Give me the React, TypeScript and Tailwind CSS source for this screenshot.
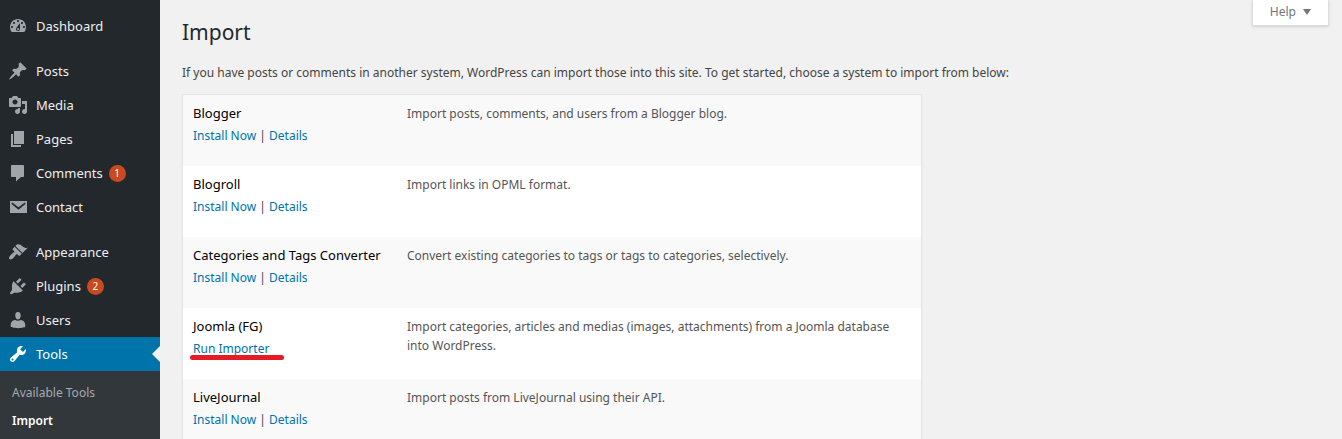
import { Fragment } from "react";

const icons = {
  dashboard:
    "M3.76 16h12.48c1.1-1.37 1.76-3.11 1.76-5 0-4.42-3.58-8-8-8s-8 3.58-8 8c0 1.89.66 3.63 1.76 5zM10 4c.55 0 1 .45 1 1s-.45 1-1 1-1-.45-1-1 .45-1 1-1zM6 6c.55 0 1 .45 1 1s-.45 1-1 1-1-.45-1-1 .45-1 1-1zm8 0c.55 0 1 .45 1 1s-.45 1-1 1-1-.45-1-1 .45-1 1-1zm-5.37 5.55L12 7v6c0 1.1-.9 2-2 2s-2-.9-2-2c0-.57.24-1.08.63-1.45zM4 10c.55 0 1 .45 1 1s-.45 1-1 1-1-.45-1-1 .45-1 1-1zm12 0c.55 0 1 .45 1 1s-.45 1-1 1-1-.45-1-1 .45-1 1-1zm-5 3c0-.55-.45-1-1-1s-1 .45-1 1 .45 1 1 1 1-.45 1-1z",
  posts:
    "M10.44 3.02l1.82-1.82 6.36 6.35-1.83 1.82c-1.05-.68-2.48-.57-3.41.36l-.75.75c-.92.93-1.04 2.35-.35 3.41l-1.83 1.82-2.41-2.41-2.8 2.79c-.42.42-3.38 2.71-3.8 2.29s1.86-3.39 2.28-3.81l2.79-2.79L4.1 9.36l1.83-1.82c1.05.69 2.48.57 3.4-.36l.75-.75c.93-.92 1.05-2.35.36-3.41z",
  media:
    "M13 11V4c0-.55-.45-1-1-1h-1.67L9 1H5L3.67 3H2c-.55 0-1 .45-1 1v7c0 .55.45 1 1 1h10c.55 0 1-.45 1-1zM7 4.5c1.38 0 2.5 1.12 2.5 2.5S8.38 9.5 7 9.5 4.5 8.38 4.5 7 5.62 4.5 7 4.5zM14 6h5v10.5c0 1.38-1.12 2.5-2.5 2.5S14 17.88 14 16.5s1.12-2.5 2.5-2.5c.17 0 .34.02.5.05V9h-3V6zm-4 8.05V13h2v3.5c0 1.38-1.12 2.5-2.5 2.5S7 17.88 7 16.5 8.12 14 9.5 14c.17 0 .34.02.5.05z",
  pages: "M6 15V2h10v13H6zm-1 1h8v2H3V5h2v11z",
  comments:
    "M4 2h11c.6 0 1 .4 1 1v10c0 .6-.4 1-1 1h-2l-5 4.5V14H4c-.6 0-1-.4-1-1V3c0-.6.4-1 1-1z",
  contact:
    "M2 4h17v12H2zM4.2 5.6L3.3 6.7l7.2 6 7.2-6-.9-1.1-6.3 4.7z",
  appearance:
    "M14.48 11.06L7.41 3.99l1.5-1.5c.5-.56 2.3-.47 3.51.32 1.21.8 1.43 1.28 2.91 2.1 1.18.64 2.45 1.26 4.45.85zm-.71.71L6.7 4.7 4.93 6.47c-.39.39-.39 1.02 0 1.41l1.06 1.06c.39.39.39 1.03 0 1.42-.6.6-1.43 1.11-2.21 1.69-.35.26-.7.53-1.01.84C1.43 14.23.4 16.08 1.4 17.07c.99 1 2.84-.03 4.18-1.36.31-.31.58-.66.85-1.02.57-.78 1.08-1.61 1.69-2.21.39-.39 1.02-.39 1.41 0l1.06 1.06c.39.39 1.02.39 1.41 0z",
  plugins:
    "M13.11 4.36L9.87 7.6 8 5.73l3.24-3.24c.35-.34 1.05-.2 1.56.32.52.51.66 1.21.31 1.55zM5.5 5.2L14.9 14.6l-1.3.9c-.9.7-2.6 1.2-3.9 1.2H6.14L4 18c-.59.59-1.1.4-1.6-.2-.5-.5-.6-1 0-1.6l1.6-2.1V10c0-1.5.6-3.9 1.5-4.8zM12.37 10.1l3.24-3.24c.34-.35 1.04-.21 1.55.31.52.51.66 1.21.31 1.55l-3.24 3.25z",
  users:
    "M10 9.4c-2.27 0-2.73-3.5-2.73-3.5C7 4.02 7.82 2 9.97 2c2.16 0 2.98 2.02 2.71 3.9 0 0-.41 3.5-2.68 3.5zM7.1 10c.9.5 1.8.8 2.9.8s2-.3 2.9-.8c2.3.1 4.34 2.3 4.34 4.53v2.49s-3.65 1.13-7.24 1.13c-3.65 0-7.24-1.13-7.24-1.13v-2.49c0-2.25 1.94-4.48 4.34-4.53z",
  tools:
    "M16.68 9.77c-1.34 1.34-3.3 1.67-4.95.99l-5.41 6.52c-.99.99-2.59.99-3.58 0s-.99-2.59 0-3.57l6.52-5.42c-.68-1.65-.35-3.61.99-4.95 1.28-1.28 3.12-1.62 4.72-1.06l-2.89 2.89 2.82 2.82 2.86-2.87c.53 1.58.18 3.39-1.08 4.65zM3.81 16.21c.4.39 1.04.39 1.43 0 .4-.4.4-1.04 0-1.43-.39-.4-1.03-.4-1.43 0-.39.39-.39 1.03 0 1.43z",
};

type MenuEntry = {
  label: string;
  icon: keyof typeof icons;
  count?: number;
  current?: boolean;
};

const menuGroups: MenuEntry[][] = [
  [{ label: "Dashboard", icon: "dashboard" }],
  [
    { label: "Posts", icon: "posts" },
    { label: "Media", icon: "media" },
    { label: "Pages", icon: "pages" },
    { label: "Comments", icon: "comments", count: 1 },
    { label: "Contact", icon: "contact" },
  ],
  [
    { label: "Appearance", icon: "appearance" },
    { label: "Plugins", icon: "plugins", count: 2 },
    { label: "Users", icon: "users" },
    { label: "Tools", icon: "tools", current: true },
  ],
];

const importers = [
  { name: "Blogger", desc: "Import posts, comments, and users from a Blogger blog." },
  { name: "Blogroll", desc: "Import links in OPML format." },
  { name: "Categories and Tags Converter", desc: "Convert existing categories to tags or tags to categories, selectively." },
  {
    name: "Joomla (FG)",
    desc: "Import categories, articles and medias (images, attachments) from a Joomla database into WordPress.",
    installed: true,
  },
  { name: "LiveJournal", desc: "Import posts from LiveJournal using their API." },
];

function MenuItem({ label, icon, count, current }: MenuEntry) {
  return (
    <li>
      <a
        href="#"
        className={
          current
            ? "relative flex h-[34px] items-center bg-[#0073aa] pl-2 text-[13px] text-white"
            : "flex h-[34px] items-center pl-2 text-[13px] text-[#eeeeee] hover:text-[#00b9eb]"
        }
      >
        <svg
          viewBox="0 0 20 20"
          className={current ? "mr-2 size-5 fill-white" : "mr-2 size-5 fill-[#a0a5aa]"}
          aria-hidden="true"
        >
          <path d={icons[icon]} />
        </svg>
        <span className="pt-0.5">{label}</span>
        {count && (
          <span className="ml-1.5 flex size-[17px] items-center justify-center rounded-full bg-[#ca4a1f] text-[10px] leading-none text-white">
            {count}
          </span>
        )}
        {current && (
          <span className="absolute right-0 top-1/2 -translate-y-1/2 border-8 border-transparent border-r-[#f1f1f1]" />
        )}
      </a>
    </li>
  );
}

export default function App() {
  return (
    <div className="flex h-screen overflow-hidden bg-[#f1f1f1] font-['Noto_Sans',sans-serif] text-xs text-[#444444]">
      {/* Admin menu */}
      <nav className="w-40 shrink-0 bg-[#23282d] pt-[9px]">
        {menuGroups.map((group, i) => (
          <ul key={i} className="mb-[11px] last-of-type:mb-0">
            {group.map((item) => (
              <MenuItem key={item.label} {...item} />
            ))}
          </ul>
        ))}
        <div className="bg-[#32373c] px-3 pt-2 pb-1.5 leading-7">
          <a href="#" className="block text-[#a7aaad]">Available Tools</a>
          <a href="#" className="block font-semibold text-white">Import</a>
        </div>
      </nav>

      <main className="min-w-0 flex-1 pl-[22px] pr-[13px]">
        <div className="flex items-start justify-between">
          <h1 className="pt-4 text-[21px] leading-8 text-[#23282d]">Import</h1>
          <button
            type="button"
            className="flex h-[26px] items-center gap-[7px] border border-t-0 border-[#dddddd] bg-white px-[17px] pb-0.5 text-[#72777c] shadow-sm"
          >
            Help
            <svg viewBox="0 0 8 6" className="h-1.5 w-2 fill-current" aria-hidden="true">
              <path d="M0 0h8L4 6z" />
            </svg>
          </button>
        </div>

        <p className="mt-[15px] leading-5">
          If you have posts or comments in another system, WordPress can import those into this site. To get started, choose a system to import from below:
        </p>

        {/* Importers */}
        <table className="mt-[11px] w-full max-w-[740px] table-fixed border-separate border-spacing-0 border border-[#e5e5e5] bg-white shadow-xs">
          <tbody>
            {importers.map((importer) => (
              <tr key={importer.name} className="h-[71px] align-top odd:bg-[#f9f9f9]">
                <td className="w-[214px] whitespace-nowrap px-2.5 pt-[7px]">
                  <span className="block text-[13px] leading-[22px] text-black">{importer.name}</span>
                  {importer.installed ? (
                    <span className="relative inline-block leading-6">
                      <a href="#" className="text-[#0073aa]">Run Importer</a>
                      {/* red marker line */}
                      <span className="absolute -left-[3px] top-[18px] h-[5px] w-[94px] rounded-full bg-[#e51c23]" />
                    </span>
                  ) : (
                    <span className="block leading-6">
                      {["Install Now", "Details"].map((action, i) => (
                        <Fragment key={action}>
                          {i > 0 && " | "}
                          <a href="#" className="text-[#0073aa]">{action}</a>
                        </Fragment>
                      ))}
                    </span>
                  )}
                </td>
                <td className="px-2.5 pt-[9px] leading-[19px] text-[#555555]">{importer.desc}</td>
              </tr>
            ))}
          </tbody>
        </table>
      </main>
    </div>
  );
}
